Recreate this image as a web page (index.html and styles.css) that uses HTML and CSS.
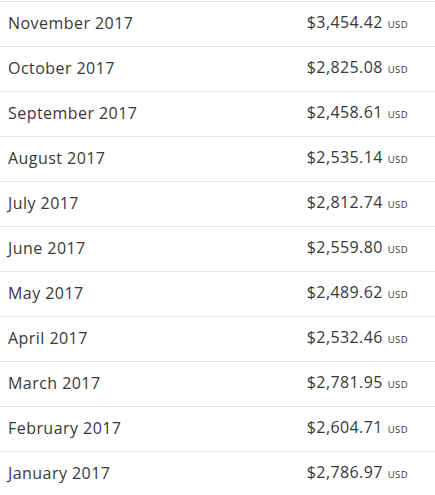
FILE: index.html
```html
<!DOCTYPE html>
<html>
<head>
<meta charset="utf-8">
<link rel="stylesheet" href="styles.css">
</head>
<body>
<ul class="months">
  <li class="row"><span class="month">November 2017</span><span class="amount">$3,454.42<span class="cur">USD</span></span></li>
  <li class="row"><span class="month">October 2017</span><span class="amount">$2,825.08<span class="cur">USD</span></span></li>
  <li class="row"><span class="month">September 2017</span><span class="amount">$2,458.61<span class="cur">USD</span></span></li>
  <li class="row"><span class="month">August 2017</span><span class="amount">$2,535.14<span class="cur">USD</span></span></li>
  <li class="row"><span class="month">July 2017</span><span class="amount">$2,812.74<span class="cur">USD</span></span></li>
  <li class="row"><span class="month">June 2017</span><span class="amount">$2,559.80<span class="cur">USD</span></span></li>
  <li class="row"><span class="month">May 2017</span><span class="amount">$2,489.62<span class="cur">USD</span></span></li>
  <li class="row"><span class="month">April 2017</span><span class="amount">$2,532.46<span class="cur">USD</span></span></li>
  <li class="row"><span class="month">March 2017</span><span class="amount">$2,781.95<span class="cur">USD</span></span></li>
  <li class="row"><span class="month">February 2017</span><span class="amount">$2,604.71<span class="cur">USD</span></span></li>
  <li class="row"><span class="month">January 2017</span><span class="amount">$2,786.97<span class="cur">USD</span></span></li>
</ul>
</body>
</html>
```
FILE: styles.css
```css
html, body {
  margin: 0;
  padding: 0;
  background: #fff;
}
body {
  font-family: "Open Sans", "DejaVu Sans", sans-serif;
  color: #383838;
  padding-top: 1px;
}
.months {
  list-style: none;
  margin: 0;
  padding: 0;
}
.row {
  display: flex;
  justify-content: space-between;
  align-items: center;
  height: 42px;
  box-sizing: content-box;
  border-top: 1px solid #e5e5e5;
  padding: 0 27px 2px 8px;
  font-size: 16px;
  letter-spacing: 0.45px;
  line-height: 20px;
}
.amount {
  display: flex;
  align-items: baseline;
  letter-spacing: 0.4px;
}
.cur {
  font-size: 9.5px;
  margin-left: 5px;
  letter-spacing: 0.4px;
}
```
